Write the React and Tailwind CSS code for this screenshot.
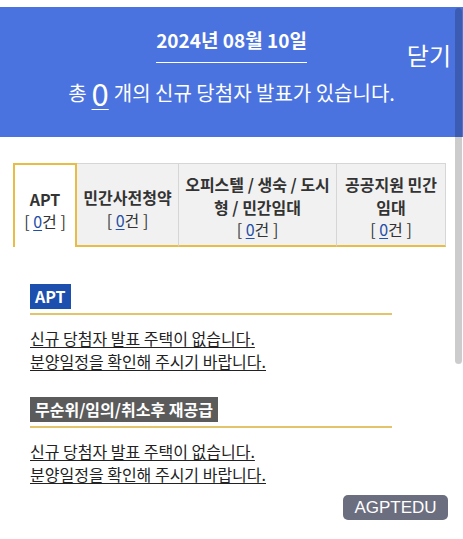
import React from "react";

const font = { fontFamily: '"Noto Sans CJK KR", "Noto Sans", sans-serif' };

function Count() {
  return (
    <span className="font-normal">
      [ <span className="text-[#1f4fa8] underline underline-offset-2">0</span>건 ]
    </span>
  );
}

function Block({ label, labelBg }) {
  return (
    <div className="w-[362px]">
      <div className="flex">
        <span className={`${labelBg} text-white font-bold text-[16px] leading-[25px] px-[5px]`}>{label}</span>
      </div>
      <div className="mt-[4px] h-[2px] bg-[#e3c46a]" />
      <div className="mt-[12px] text-[16px] leading-[23px] text-[#222]">
        <p className="underline underline-offset-2 decoration-1">신규 당첨자 발표 주택이 없습니다.</p>
        <p className="underline underline-offset-2 decoration-1">분양일정을 확인해 주시기 바랍니다.</p>
      </div>
    </div>
  );
}

export default function App() {
  return (
    <div className="relative w-[463px] h-[539px] overflow-hidden bg-white" style={font}>
      <div className="pt-[7px]">
        <header className="relative bg-[#4b73e0] h-[130px] flex flex-col items-center text-white">
          <div className="pt-[20px] pb-[10px] border-b border-white text-[19px] font-bold leading-[25px]">
            2024년 08월 10일
          </div>
          <div className="mt-[12px] text-[20px] leading-[36px] flex items-center">
            <span>총</span>
            <span className="mx-[5px] text-[31px] leading-[36px] underline decoration-1 underline-offset-[3px]">0</span>
            <span>개의 신규 당첨자 발표가 있습니다.</span>
          </div>
          <button className="absolute right-[12px] top-[32px] text-[24px] leading-[32px] text-white">닫기</button>
        </header>
      </div>

      <div className="mt-[26px] mx-[13px] flex h-[84px] text-[16px] leading-[22.5px] text-[#333] text-center">
        <div className="w-[64px] flex flex-col items-center justify-center pt-[8px] border-2 border-b-0 border-[#e9bd45] bg-white font-bold">
          <span>APT</span>
          <Count />
        </div>
        <div className="w-[102px] flex flex-col items-center justify-center pt-[8px] bg-[#f1f1f1] border-t border-r border-[#d6d6d6] border-b-2 border-b-[#e9bd45] font-bold">
          <span>민간사전청약</span>
          <Count />
        </div>
        <div className="w-[158px] flex flex-col items-center justify-center pt-[5px] bg-[#f1f1f1] border-t border-r border-[#d6d6d6] border-b-2 border-b-[#e9bd45] font-bold">
          <span>오피스텔 / 생숙 / 도시형 / 민간임대</span>
          <Count />
        </div>
        <div className="w-[109px] flex flex-col items-center justify-center pt-[5px] bg-[#f1f1f1] border-t border-r border-[#d6d6d6] border-b-2 border-b-[#e9bd45] font-bold px-[2px]">
          <span>공공지원 민간임대</span>
          <Count />
        </div>
      </div>

      <div className="mt-[37px] ml-[30px] flex flex-col gap-[24px]">
        <Block label="APT" labelBg="bg-[#1c4fae]" />
        <Block label="무순위/임의/취소후 재공급" labelBg="bg-[#5b5b5b]" />
      </div>

      <div className="flex justify-end mr-[15px] mt-[9px]">
        <div className="w-[105px] h-[25px] rounded-[5px] bg-[#6b6e7e] text-white text-[17px] leading-[25px] text-center" style={{ fontFamily: '"Liberation Sans", Arial, sans-serif' }}>
          AGPTEDU
        </div>
      </div>

      <div className="absolute right-[1px] top-[8px] w-[7px] h-[356px] rounded-full bg-black/20" />
    </div>
  );
}
